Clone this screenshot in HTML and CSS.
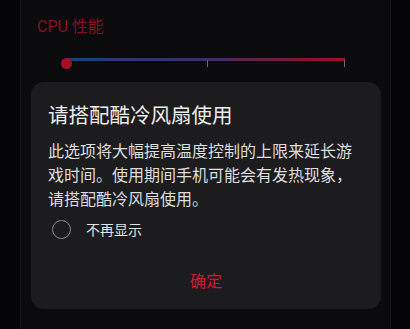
FILE: index.html
```html
<!DOCTYPE html>
<html lang="zh-CN">
<head>
  <meta charset="UTF-8">
  <meta name="viewport" content="width=device-width, initial-scale=1.0">
  <title>CPU 性能</title>
  <link rel="stylesheet" href="styles.css">
</head>
<body>
  <div class="panel">
    <h3 class="section-title">CPU 性能</h3>

    <div class="slider">
      <div class="track"></div>
      <span class="tick tick-mid"></span>
      <span class="tick tick-end"></span>
      <span class="thumb"></span>
    </div>

    <div class="dialog">
      <h2 class="dialog-title">请搭配酷冷风扇使用</h2>
      <p class="dialog-text">此选项将大幅提高温度控制的上限来延长游戏时间。使用期间手机可能会有发热现象，请搭配酷冷风扇使用。</p>
      <label class="check-row">
        <span class="radio"></span>
        <span>不再显示</span>
      </label>
      <div class="dialog-actions">
        <button type="button" class="ok-btn">确定</button>
      </div>
    </div>
  </div>
</body>
</html>
```

FILE: styles.css
```css
body {
  margin: 0;
  padding: 0;
  height: 329px;
  overflow: hidden;
  background-color: #040409;
  font-family: "Noto Sans CJK SC", "Noto Sans", sans-serif;
}

.panel {
  margin-left: 20px;
  width: 371px;
  height: 329px;
  background-color: #0b0b0d;
  border-left: 1px solid #141821;
  border-right: 1px solid #141821;
  padding-top: 17px;
  box-sizing: border-box;
}

.section-title {
  margin: 0 0 0 16px;
  font-family: Roboto, "Noto Sans CJK SC", sans-serif;
  font-size: 16px;
  font-weight: normal;
  line-height: 20px;
  color: #8a101f;
}

.slider {
  position: relative;
  margin: 21px 0 0 40px;
  width: 286px;
  height: 12px;
}

.track {
  margin: 4px 0 0 6px;
  width: 278px;
  height: 3px;
  background: linear-gradient(to right, #1a3f7e, #3c2f66 50%, #7a1838 80%, #a30c25);
}

.tick {
  position: absolute;
  top: 2px;
  width: 1px;
  height: 7px;
  background-color: #6b6b70;
}

.tick-mid {
  left: 146px;
}

.tick-end {
  left: 283px;
}

.thumb {
  position: absolute;
  left: 0;
  top: 0;
  width: 11px;
  height: 11px;
  border-radius: 50%;
  background-color: #a90d24;
}

.dialog {
  margin: 12px 0 0 10px;
  width: 350px;
  background-color: #1c1c1e;
  border-radius: 13px;
  padding: 18px 17px 17px 17px;
  box-sizing: border-box;
}

.dialog-title {
  margin: 0;
  font-size: 20.5px;
  font-weight: normal;
  line-height: 28px;
  color: #ececec;
}

.dialog-text {
  margin: 10px 0 0 0;
  font-size: 16px;
  line-height: 24px;
  color: #dedede;
}

.check-row {
  display: flex;
  align-items: center;
  gap: 15px;
  margin-top: 9px;
  height: 20px;
  font-size: 14px;
  color: #e2e2e2;
}

.radio {
  margin-left: 4px;
  width: 17px;
  height: 17px;
  border: 1.5px solid #8a8a8d;
  border-radius: 50%;
}

.dialog-actions {
  margin-top: 29px;
  text-align: center;
}

.ok-btn {
  background: none;
  border: none;
  padding: 0;
  font-family: "Noto Sans CJK SC", sans-serif;
  font-size: 16px;
  line-height: 24px;
  color: #d2162c;
  cursor: pointer;
}
```
